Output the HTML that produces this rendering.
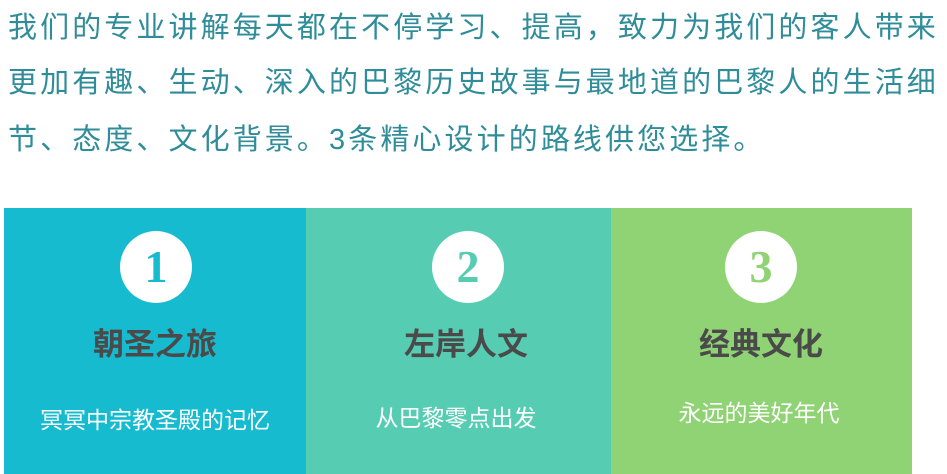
<!DOCTYPE html><html><head><meta charset="utf-8"><style>
body{margin:0;width:947px;height:474px;background:#fff;overflow:hidden;position:relative;font-family:"Liberation Sans","Noto Sans CJK SC",sans-serif}
.t{position:absolute;left:8px;color:#2f8c99;font-size:29px;letter-spacing:3.1px;white-space:nowrap;line-height:40px}
.p{position:absolute;top:208px;height:266px}
.c{position:absolute;top:231px;width:72px;height:72px;border-radius:50%;background:#fff;font-family:"Liberation Serif",serif;font-weight:bold;font-size:46px;line-height:72px;text-align:center}
.h{position:absolute;top:325px;width:300px;text-align:center;font-size:31px;color:#4a4a4a;font-weight:bold;line-height:40px}
.s{position:absolute;width:300px;text-align:center;font-size:23px;color:#fff;line-height:30px}
</style></head><body>
<div class="t" style="top:8px">我们的专业讲解每天都在不停学习、提高，致力为我们的客人带来</div>
<div class="t" style="top:63px">更加有趣、生动、深入的巴黎历史故事与最地道的巴黎人的生活细</div>
<div class="t" style="top:120px">节、态度、文化背景。3条精心设计的路线供您选择。</div>
<div class="p" style="left:4px;width:302px;background:#17bbcf"></div>
<div class="p" style="left:306px;width:305px;background:#56cdb3"></div>
<div class="p" style="left:611px;width:301px;background:#90d375"></div>
<div class="c" style="left:120px;color:#17bbcf">1</div>
<div class="c" style="left:432px;color:#56cdb3">2</div>
<div class="c" style="left:725px;color:#90d375">3</div>
<div class="h" style="left:5px">朝圣之旅</div>
<div class="h" style="left:316px">左岸人文</div>
<div class="h" style="left:611px">经典文化</div>
<div class="s" style="left:5px;top:405px">冥冥中宗教圣殿的记忆</div>
<div class="s" style="left:306px;top:403px">从巴黎零点出发</div>
<div class="s" style="left:609px;top:398px">永远的美好年代</div>
</body></html>
